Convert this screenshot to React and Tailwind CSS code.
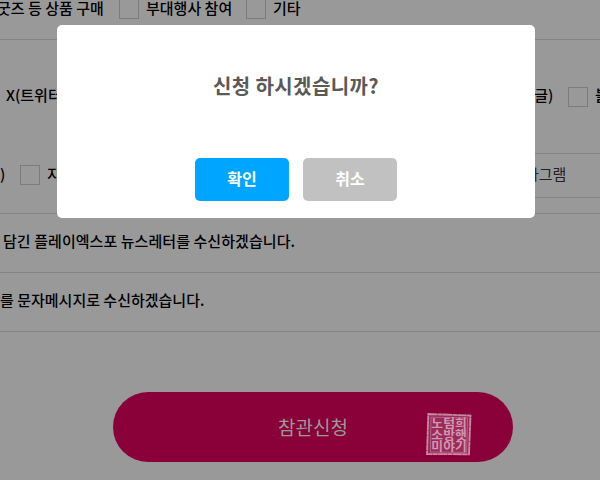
function Check() {
  return <span className="box-border block h-5 w-5 shrink-0 border border-[#7c7c7c]" />;
}

const rows = [
  ["노텀희", 428.3],
  ["소방햇", 439.8],
  ["미야기", 451.3],
];

function Seal() {
  return (
    <svg className="h-[44px] w-[46px] shrink-0" viewBox="426 412 46 44">
      <path d="M428 414 L471 415.5 L469 454.5 L427 454 Z" fill="#c68aa5" fillOpacity="0.3" />
      <g fill="none" stroke="#c68aa5">
        <path d="M428.3 414 L470.5 415.5 L469 454.3 L427 454 Z" strokeWidth="1.8" strokeDasharray="9 .4 5 .3" />
        <path d="M431 417.2 L467.6 418 L466.6 452.4 L430.4 452 Z" strokeWidth="1" strokeOpacity="0.55" />
      </g>
      <g fill="#cf97b0" fontSize="12" fontWeight="700" fontFamily="'Noto Sans CJK KR', sans-serif">
        {rows.map(([text, y]) => (
          <text key={text} x="431.3" y={y} textLength="35.5" lengthAdjust="spacingAndGlyphs">{text}</text>
        ))}
      </g>
    </svg>
  );
}

export default function App() {
  return (
    <div className="relative h-[480px] w-[600px] overflow-hidden bg-[#999999] font-['Noto_Sans_CJK_KR',sans-serif] text-[15px] leading-5 font-medium whitespace-nowrap text-black">
      <div className="flex h-10 items-start border-b border-[#848484]">
        <div className="-mt-px flex h-5 items-center">
          <span className="-ml-[3px] w-[122px] shrink-0 pb-0.5">굿즈 등 상품 구매</span>
          <Check />
          <span className="ml-[7px] w-[100px] shrink-0 pb-0.5">부대행사 참여</span>
          <Check />
          <span className="ml-[7px] pb-0.5">기타</span>
        </div>
      </div>
      <div className="flex h-[113px] items-center justify-between">
        <span className="ml-[6px] pb-[3px]">X(트위터)</span>
        <div className="flex w-[80px] items-center">
          <span className="-ml-[13px] w-[61px] shrink-0 pb-[3px] pl-[8px]">(구글)</span>
          <Check />
          <span className="ml-[7px] pb-[3px]">블로그</span>
        </div>
      </div>
      <div className="flex h-[61px] items-start justify-between border-b border-[#848484]">
        <div className="mt-[11px] flex items-center">
          <span className="w-5 pb-0.5">)</span>
          <Check />
          <span className="ml-[7px] pb-0.5">지인</span>
        </div>
        <div className="flex h-[45px] w-[100px] items-center border-y border-[#848484] pb-[3px] pl-[25px] font-normal text-[#222]">라그램</div>
      </div>
      <div className="flex h-[59px] items-center border-b border-[#848484] pb-[5px] pl-[3px] tracking-[0.06px]">담긴 플레이엑스포 뉴스레터를 수신하겠습니다.</div>
      <div className="flex h-[59px] items-center border-b border-[#848484] pb-[5px]">를 문자메시지로 수신하겠습니다.</div>
      <div className="mt-[60px] ml-[113px] flex h-[70px] w-[400px] items-center rounded-full bg-[#8a0039] text-[19px] font-normal text-[#999]">
        <span className="ml-[165px] w-[148px] shrink-0">참관신청</span>
        <div className="mt-[14px]"><Seal /></div>
      </div>
      <div className="absolute top-[25px] left-[57px] flex h-[193px] w-[478px] flex-col items-center rounded-[5px] bg-white">
        <h2 className="mt-[46px] text-[20px] leading-[30px] font-bold tracking-[0.4px] text-[#595959]">신청 하시겠습니까?</h2>
        <div className="mt-[57px] flex gap-[14px] text-[16px] font-bold text-white">
          <button className="h-[43px] w-[94px] rounded-[5px] bg-[#00a5ff] pb-[3px]">확인</button>
          <button className="h-[43px] w-[94px] rounded-[5px] bg-[#c1c1c1] pb-[3px]">취소</button>
        </div>
      </div>
    </div>
  );
}
